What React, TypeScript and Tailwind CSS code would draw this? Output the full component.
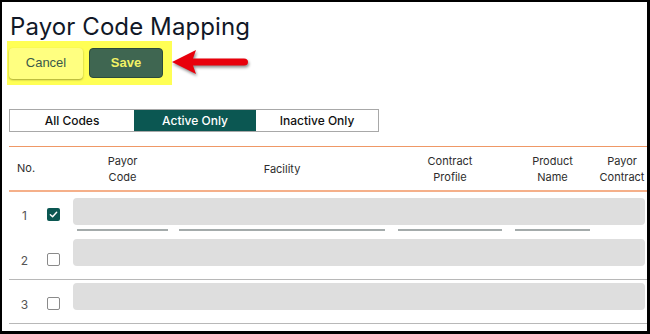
import React from 'react';

const cols = [
  { label: ['Payor', 'Code'], w: 'w-[99px]' },
  { label: ['Facility'], w: 'w-[220px]' },
  { label: ['Contract', 'Profile'], w: 'w-[116px]' },
  { label: ['Product', 'Name'], w: 'w-[89px]' },
  { label: ['Payor', 'Contract'], w: 'flex-1' },
];

const Checkbox: React.FC<{ checked?: boolean }> = ({ checked }) =>
  checked ? (
    <div className="w-[13px] h-[13px] rounded-[2px] bg-[#0b5752] flex items-center justify-center">
      <svg width="9" height="9" viewBox="0 0 10 10" fill="none">
        <path d="M1.5 5.2 L4 7.5 L8.5 2.5" stroke="white" strokeWidth="1.6" strokeLinecap="round" strokeLinejoin="round" />
      </svg>
    </div>
  ) : (
    <div className="w-[13px] h-[13px] rounded-[2px] border-[1.5px] border-[#8a8a8a] bg-white" />
  );

const Row: React.FC<{ n: number; checked?: boolean; first?: boolean }> = ({ n, checked, first }) => (
  <div className={`flex h-[44px] ${first ? '' : 'border-b-[1.5px] border-[#b8b8b8]'}`}>
    <div className={`w-[31px] ${first ? 'pt-[15px]' : 'pt-[16px]'} text-center text-[12px] text-[#555]`}>{n}</div>
    <div className={`w-[33px] ${first ? 'pt-[16px]' : 'pt-[17px]'} pl-[7px]`}>
      <Checkbox checked={checked} />
    </div>
    <div className={`flex-1 ${first ? 'pt-[6px]' : 'pt-[3px]'} pr-[2px]`}>
      <div className="h-[27px] rounded-[4px] bg-[#dedede]" />
      {first && (
        <div className="flex mt-[4px]">
          <div className="w-[99px] px-[4px]"><div className="h-[2px] bg-[#a4abab]" /></div>
          <div className="w-[220px] px-[7px]"><div className="h-[2px] bg-[#a4abab]" /></div>
          <div className="w-[116px] px-[6px]"><div className="h-[2px] bg-[#a4abab]" /></div>
          <div className="w-[89px] pl-[7px] pr-[7px]"><div className="h-[2px] bg-[#a4abab]" /></div>
        </div>
      )}
    </div>
  </div>
);

const App: React.FC = () => {
  return (
    <div className="w-[650px] h-[334px] bg-white border-t-[2px] border-l-[2px] border-r-[3px] border-b-[3px] border-black overflow-hidden relative" style={{ fontFamily: 'Inter, "Noto Sans", sans-serif' }}>
      <h1 className="pl-[8px] pt-[10px] text-[24px] leading-[29px] text-[#111827] tracking-[0.1px]">Payor Code Mapping</h1>

      {/* Buttons, highlighted */}
      <div className="flex items-center">
        <div className="ml-[5px] w-[165px] h-[44px] bg-[#ffff55] flex items-center pl-[2px] gap-[6px]">
          <button className="w-[74px] h-[31px] rounded-[4px] bg-[#ffff80] shadow-[0_1px_2px_rgba(0,0,0,0.35)] text-[13px] text-[#3b5a4b]" style={{ fontFamily: '"Liberation Sans", Arial, sans-serif' }}>Cancel</button>
          <button className="w-[74px] h-[30px] rounded-[4px] bg-[#3f6651] border border-[#2c4b3c] text-[13px] font-bold text-[#f2f265]" style={{ fontFamily: '"Liberation Sans", Arial, sans-serif' }}>Save</button>
        </div>
        <svg width="82" height="34" viewBox="0 0 82 34" className="ml-[-2px] drop-shadow-[1px_2px_1.5px_rgba(0,0,0,0.45)]">
          <path d="M2 16 L26 4 L23 12.5 L74 12.5 Q78 12.5 78 16 Q78 19.5 74 19.5 L23 19.5 L26 28 Z" fill="#e8000b" />
        </svg>
      </div>

      {/* Tabs */}
      <div className="flex ml-[7px] mt-[24px] w-[370px] h-[23px] border border-[#a8a8a8] text-[12px] font-medium">
        <div className="w-[124px] flex items-center justify-center text-[#111]">All Codes</div>
        <div className="w-[122px] flex items-center justify-center bg-[#0b5752] text-white">Active Only</div>
        <div className="flex-1 flex items-center justify-center text-[#111]">Inactive Only</div>
      </div>

      {/* Table */}
      <div className="ml-[7px] mt-[14px]">
        <div className="flex h-[46px] border-t-[1.5px] border-b-[2px] border-t-[#ef9866] border-b-[#f5b08a] text-[11px] text-[#2d2d2d] items-center">
          <div className="w-[31px] pl-[8px]">No.</div>
          <div className="w-[33px]" />
          {cols.map((c, i) => (
            <div key={i} className={`${c.w} text-center leading-[16px]`}>
              {c.label.map(l => <div key={l}>{l}</div>)}
            </div>
          ))}
        </div>
        <Row n={1} checked first />
        <Row n={2} />
        <Row n={3} />
      </div>
    </div>
  );
};

export default App;
